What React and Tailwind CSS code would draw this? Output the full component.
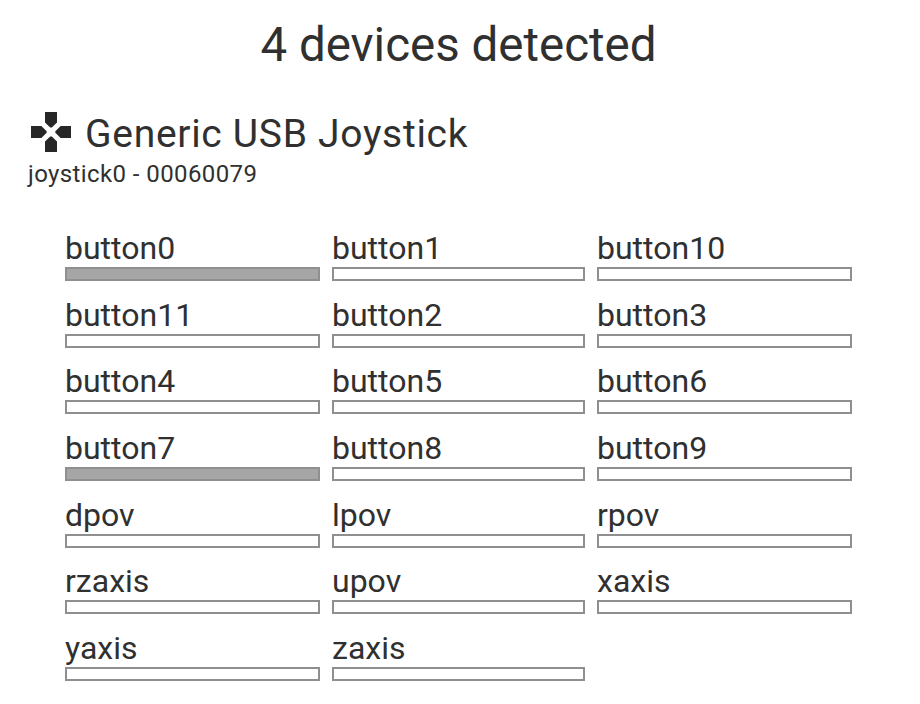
import React from "react";

const device = {
  name: "Generic USB Joystick",
  id: "joystick0 - 00060079",
  inputs: [
    { name: "button0", value: 1 },
    { name: "button1", value: 0 },
    { name: "button10", value: 0 },
    { name: "button11", value: 0 },
    { name: "button2", value: 0 },
    { name: "button3", value: 0 },
    { name: "button4", value: 0 },
    { name: "button5", value: 0 },
    { name: "button6", value: 0 },
    { name: "button7", value: 1 },
    { name: "button8", value: 0 },
    { name: "button9", value: 0 },
    { name: "dpov", value: 0 },
    { name: "lpov", value: 0 },
    { name: "rpov", value: 0 },
    { name: "rzaxis", value: 0 },
    { name: "upov", value: 0 },
    { name: "xaxis", value: 0 },
    { name: "yaxis", value: 0 },
    { name: "zaxis", value: 0 },
  ],
};

function DpadIcon() {
  return (
    <svg viewBox="2 2 20 20" className="w-10 h-10 shrink-0" fill="#272727">
      <path d="M15 7.2V2H9v5.2l2.6 2.6h.8z" />
      <path d="M7.2 9H2v6h5.2l2.6-2.6v-.8z" />
      <path d="M9 16.8V22h6v-5.2l-2.6-2.6h-.8z" />
      <path d="M16.8 9l-2.6 2.6v.8l2.6 2.6H22V9z" />
    </svg>
  );
}

function InputMeter({ input }) {
  return (
    <div className="h-[66.7px]">
      <div className="text-[32px] leading-9 h-[37px]">{input.name}</div>
      <div className="h-[14px] border-2 border-[#8f8f8f]">
        <div className="h-full bg-[#a6a6a6]" style={{ width: `${input.value * 100}%` }} />
      </div>
    </div>
  );
}

function App() {
  return (
    <div className="w-full h-[704px] overflow-hidden bg-white text-[#303030] font-['Roboto',sans-serif]">
      <h1 className="pt-4 pr-[3px] text-center text-[47.5px] leading-[58px]">4 devices detected</h1>
      <div className="flex items-start pl-[31px] gap-[14px] mt-[38px] h-11">
        <DpadIcon />
        <h2 className="text-[39px] leading-[44px] tracking-[0.7px]">{device.name}</h2>
      </div>
      <p className="pl-7 text-2xl leading-8 mt-0.5 tracking-[0.4px]">{device.id}</p>
      <div className="grid grid-cols-[255px_253px_255px] gap-x-3 pl-[65px] mt-10">
        {device.inputs.map((input) => (
          <InputMeter key={input.name} input={input} />
        ))}
      </div>
    </div>
  );
}

export default App;
